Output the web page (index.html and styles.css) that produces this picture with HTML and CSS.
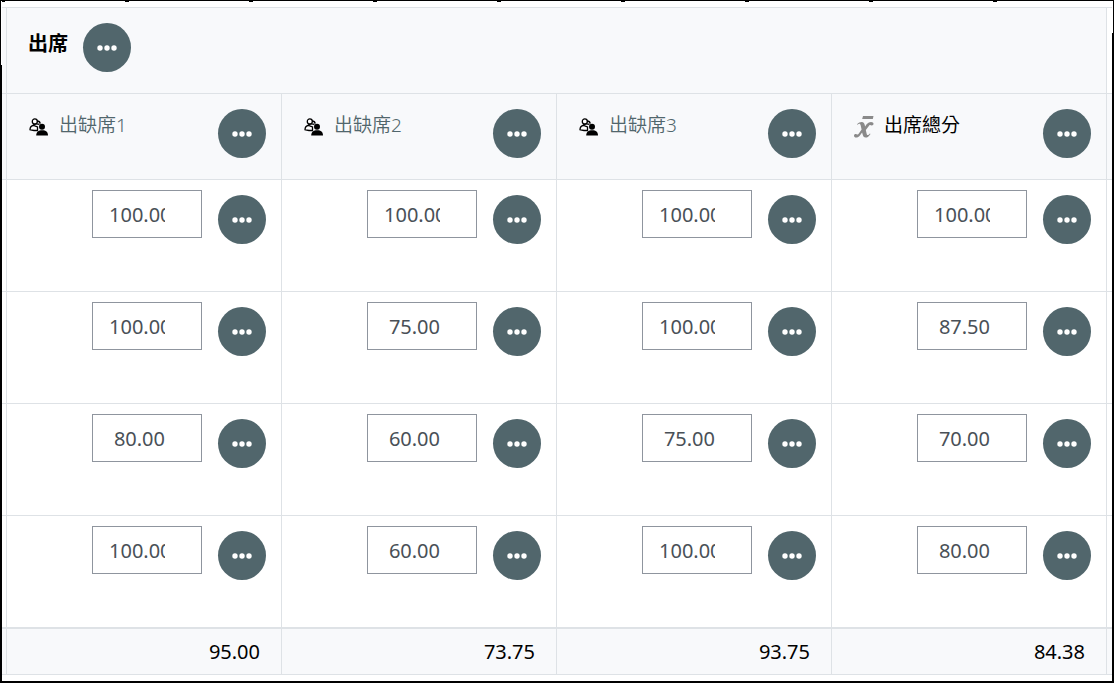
FILE: index.html
```html
<!DOCTYPE html>
<html lang="zh-Hant">
<head>
  <meta charset="UTF-8" />
  <meta name="viewport" content="width=device-width, initial-scale=1.0" />
  <title>出席</title>
  <link rel="stylesheet" href="styles.css">
</head>
<body>
  <svg class="sprite" aria-hidden="true">
    <symbol id="dots" viewBox="0 0 20 6">
      <circle cx="3" cy="3" r="2.7" />
      <circle cx="10" cy="3" r="2.7" />
      <circle cx="17" cy="3" r="2.7" />
    </symbol>
    <symbol id="people" viewBox="0 0 20 18">
      <g fill="#fff" stroke="#000" stroke-width="1.3">
        <path d="M1 11.800c0-2.800 1.200-4 3.500-4.300l4 1.500v3.500H5z" />
        <path d="M3.500 7.600c1.500-1.600 4-2.200 7-1.200" fill="none" />
        <circle cx="5.800" cy="3.400" r="2.500" />
        <path d="M8 3c2 0 3 1 3.200 2.600" fill="none" />
      </g>
      <circle cx="13" cy="8.800" r="3" />
      <path d="M7.200 17.500c0-3.400 2.200-5.200 6-5.200s5.800 1.800 5.800 5.200z" />
    </symbol>
    <symbol id="mean" viewBox="0 0 20 24">
      <path d="M9 1h10.500l-.7 3H8.200z" />
      <path d="M3 9.200c1.600-1.500 3-2.200 4.700-2.200 2 0 2.700 1.200 3.200 3.600l.2 1 1.700-2.500C14.300 7.700 15.500 7 17 7c1.500 0 2.500.7 2.500 1.800 0 1-.7 1.700-1.700 1.700-.8 0-1.100-.4-1.700-.4-.5 0-1 .4-1.600 1.300l-2.700 3.700.8 3.300c.3 1.200.6 1.700 1.100 1.700.6 0 1.300-.6 2.200-1.700l.6.5c-1.600 2.500-3 3.600-4.800 3.600-1.800 0-2.600-1-3.200-3.500l-.4-1.600-2.200 3C4.700 21.900 3.600 22.500 2.200 22.500.9 22.500 0 21.800 0 20.700c0-1 .7-1.600 1.700-1.600.8 0 1.200.4 1.700.4.6 0 1-.4 1.800-1.500l2.400-3.500L6.700 10.500C6.400 9.200 6 8.700 5.400 8.700c-.5 0-1 .3-1.900 1.100z" />
    </symbol>
  </svg>

  <div class="frame">
    <table class="grades">
      <colgroup>
        <col class="edge">
        <col><col><col><col>
        <col class="edge">
      </colgroup>
      <thead id="head"></thead>
      <tbody id="rows"></tbody>
      <tfoot id="totals"></tfoot>
    </table>
  </div>

  <script src="script.js"></script>
</body>
</html>
```
FILE: styles.css
```css
* { box-sizing: border-box; }
body {
  margin: 0;
  background-color: #fff;
  color: #000;
  font-family: "Noto Sans", "Noto Sans CJK TC", sans-serif;
  font-size: 20px;
  line-height: 28px;
}
.sprite {
  display: none;
}
.frame {
  position: relative;
  padding: 6px 0;
  border: 2px solid #000;
  border-top-width: 1px;
  background: linear-gradient(to right, #000 4px, transparent 4px) 123px 0 / 124px 1px repeat-x;
}
/* the side borders are thinner near the top */
.frame::before, .frame::after {
  content: "";
  position: absolute;
  top: 0;
  width: 1px;
  background-color: #fff;
}
.frame::before { left: -1px; height: 64px; }
.frame::after { right: -1px; height: 32px; }
.grades {
  width: 100%;
  table-layout: fixed;
  border-collapse: separate;
  border-spacing: 0;
  border-top: 1px solid #dee2e6;
}
.edge { width: 5px; }
th, td {
  padding: 0;
  border-right: 1px solid #dee2e6;
  border-bottom: 1px solid #dee2e6;
  text-align: left;
  vertical-align: top;
  font-weight: normal;
}
th:last-child, td:last-child { border-right: none; }
thead, tfoot { background-color: #f8f9fb; }
thead tr:first-child th:last-child { background-color: #fff; }
thead th { height: 86px; }
tbody td { height: 112px; }
tbody tr:last-child td { border-bottom-width: 2px; height: 113px; }
tfoot td {
  height: 46px;
  padding-right: 21px;
  text-align: right;
  vertical-align: middle;
}
tfoot td:first-child, tfoot td:last-child { padding: 0; }
.group, .item {
  display: flex;
  align-items: flex-start;
  padding: 15px 15px 0 21px;
}
.group {
  gap: 15px;
  font-weight: bold;
}
.group span { padding-top: 7px; }
.item-name {
  flex: 1;
  padding-top: 2px;
  font-size: 19px;
  color: #000;
  text-decoration: none;
}
a.item-name {
  font-weight: 350;
  color: #51666c;
}
.icon {
  width: 20px;
  height: 24px;
  margin: 6px 10px 0 1px;
}
.icon-people { height: 18px; margin-top: 9px; }
.icon-mean { fill: #8a8a8a; }
.score {
  display: flex;
  justify-content: flex-end;
  align-items: flex-start;
  gap: 16px;
  padding: 10px 15px 0;
}
.score input {
  width: 110px;
  height: 48px;
  padding: 0 36px 0 16px;
  border: 1px solid #8f959e;
  border-radius: 0;
  background-color: #fff;
  color: #495057;
  font: inherit;
  text-align: right;
  appearance: textfield;
}
.score input::-webkit-inner-spin-button {
  appearance: none;
  margin: 0;
}
.score .menu { margin-top: 5px; }
.menu {
  display: flex;
  align-items: center;
  justify-content: center;
  width: 48px;
  height: 49px;
  padding: 0;
  border: none;
  border-radius: 50%;
  background-color: #51666c;
  cursor: pointer;
}
.menu:hover { background-color: #3d4e53; }
.menu svg {
  width: 20px;
  height: 6px;
  fill: #fff;
}
```
FILE: script.js
```js
const items = ["出缺席1", "出缺席2", "出缺席3", "出席總分"];
const scores = [
  ["100.00", "100.00", "100.00", "100.00"],
  ["100.00", "75.00", "100.00", "87.50"],
  ["80.00", "60.00", "75.00", "70.00"],
  ["100.00", "60.00", "100.00", "80.00"]
];
const totals = ["95.00", "73.75", "93.75", "84.38"];

const menu = name => `<button type="button" class="menu" aria-label="${name}"><svg><use href="#dots"/></svg></button>`;

const itemHead = (name, i) => i < 3
  ? `<svg class="icon icon-people"><use href="#people"/></svg><a class="item-name" href="#">${name}</a>`
  : `<svg class="icon icon-mean"><use href="#mean"/></svg><span class="item-name">${name}</span>`;

document.getElementById("head").innerHTML = `
  <tr><th></th><th colspan="4"><div class="group"><span>出席</span>${menu("出席")}</div></th><th></th></tr>
  <tr><th></th>${items.map((name, i) => `<th><div class="item">${itemHead(name, i)}${menu(name)}</div></th>`).join("")}<th></th></tr>`;

document.getElementById("rows").innerHTML = scores.map(row => `
  <tr><td></td>${row.map((value, i) => `
    <td><div class="score">
      <input type="number" step="0.01" value="${value}" aria-label="${items[i]}">
      ${menu(items[i])}
    </div></td>`).join("")}<td></td></tr>`).join("");

document.getElementById("totals").innerHTML =
  `<tr><td></td>${totals.map(t => `<td>${t}</td>`).join("")}<td></td></tr>`;
```
